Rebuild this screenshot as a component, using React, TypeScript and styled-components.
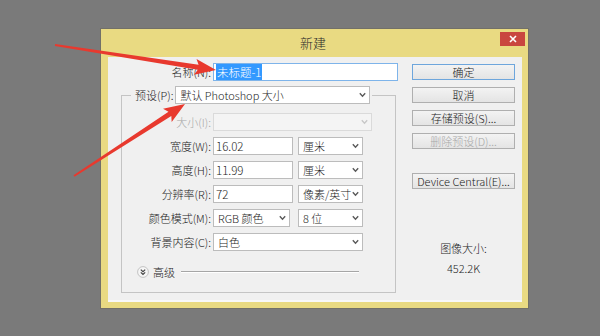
import React from "react";
import styled, { createGlobalStyle } from "styled-components";

const Global = createGlobalStyle`
  html, body { margin: 0; padding: 0; }
  body {
    background: #7a7a7a;
    width: 600px;
    height: 336px;
    overflow: hidden;
    font-family: "Noto Sans CJK SC", "Noto Sans", sans-serif;
    font-weight: 300;
    color: #1c1c1c;
  }
  * { box-sizing: border-box; }
`;

const Stage = styled.div`
  position: relative;
  width: 600px;
  height: 336px;
  padding: 29px 0 0 101px;
`;

const Dialog = styled.div`
  width: 427px;
  height: 279px;
  background: #e9da82;
  display: flex;
  flex-direction: column;
  box-shadow: 0 0 0 1px rgba(90, 85, 50, 0.25);
`;

const TitleBar = styled.div`
  height: 28px;
  display: grid;
  grid-template-columns: 1fr auto 1fr;
  padding-right: 3px;
`;

const Title = styled.div`
  grid-column: 2;
  align-self: center;
  font-size: 13px;
  color: #2a2a2a;
  margin-top: -1px;
`;

const CloseButton = styled.div`
  grid-column: 3;
  justify-self: end;
  align-self: start;
  margin-top: 3px;
  width: 25px;
  height: 14px;
  background: #c9463f;
  display: flex;
  align-items: center;
  justify-content: center;
`;

const Client = styled.div`
  flex: 1;
  margin: 0 6px 6px 7px;
  background: #f0f0f0;
  display: flex;
  padding: 6px 7px 0 0;
  border-bottom: 2px solid #f8f8f8;
`;

const LeftCol = styled.div`
  width: 292px;
  display: flex;
  flex-direction: column;
`;

const NameRow = styled.div`
  display: grid;
  grid-template-columns: 103px 185px;
  column-gap: 2px;
  align-items: center;
  height: 18px;
`;

const Label = styled.div<{ $disabled?: boolean }>`
  text-align: right;
  font-size: 11px;
  line-height: 18px;
  white-space: nowrap;
  color: ${(p) => (p.$disabled ? "#a8a8a8" : "#1c1c1c")};
`;

const TextBox = styled.div<{ $w: number; $focus?: boolean }>`
  width: ${(p) => p.$w}px;
  height: 18px;
  background: #fff;
  border: 1px solid ${(p) => (p.$focus ? "#7eb4ea" : "#bcbcbc")};
  font-size: 11.5px;
  line-height: 16px;
  padding-left: 2px;
  white-space: nowrap;
  overflow: hidden;
`;

const Selected = styled.span`
  background: #3399ff;
  color: #fff;
  padding: 0 1px;
`;

const SelectBox = styled.div<{ $w: number; $disabled?: boolean }>`
  width: ${(p) => p.$w}px;
  height: 18px;
  background: ${(p) => (p.$disabled ? "#f4f4f4" : "#fff")};
  border: 1px solid ${(p) => (p.$disabled ? "#dadada" : "#bcbcbc")};
  display: flex;
  align-items: center;
  padding: 0 3px 0 4px;
  font-size: 11px;
  white-space: nowrap;
  color: #1c1c1c;
`;

const SelectText = styled.span`
  flex: 1;
  min-width: 0;
  overflow: hidden;
`;

const Group = styled.fieldset`
  margin: 5px 0 0 13px;
  width: 275px;
  border: 1px solid #c4c4c4;
  padding: 9px 0 12px 0;
  min-inline-size: 0;
`;

const Legend = styled.legend`
  margin-left: 9px;
  padding: 0 2px 0 4px;
  display: flex;
  align-items: center;
  gap: 2px;
`;

const Rows = styled.div`
  display: grid;
  grid-template-columns: 89px auto;
  column-gap: 2px;
  row-gap: 6px;
  align-items: center;
  justify-items: start;
`;

const RowLabel = styled(Label)`
  justify-self: end;
`;

const Pair = styled.div<{ $gap: number }>`
  display: flex;
  gap: ${(p) => p.$gap}px;
`;

const Advanced = styled.div`
  margin: 13px 0 0 15px;
  height: 16px;
  display: flex;
  align-items: center;
  gap: 4px;
`;

const AdvText = styled.span`
  font-size: 11px;
  color: #1c1c1c;
`;

const Rule = styled.div`
  width: 178px;
  height: 2px;
  margin-left: 2px;
  border-top: 1px solid #a6a6a6;
  border-bottom: 1px solid #fff;
`;

const RightCol = styled.div`
  margin-left: 12px;
  width: 103px;
  display: flex;
  flex-direction: column;
  padding-top: 1px;
`;

const Button = styled.div<{ $primary?: boolean; $disabled?: boolean; $top?: number }>`
  height: 16px;
  margin-top: ${(p) => p.$top ?? 0}px;
  border: 1px solid ${(p) => (p.$primary ? "#6ea6dc" : "#afafaf")};
  background: linear-gradient(#f3f3f3, #e4e4e4);
  display: flex;
  align-items: center;
  justify-content: center;
  font-size: 11px;
  color: ${(p) => (p.$disabled ? "#a8a8a8" : "#1c1c1c")};
  white-space: nowrap;
`;

const SizeInfo = styled.div`
  margin-top: 49px;
  display: flex;
  flex-direction: column;
  align-items: center;
  font-size: 11px;
  line-height: 20px;
  color: #1c1c1c;
`;

const Overlay = styled.svg`
  position: absolute;
  left: 0;
  top: 0;
  pointer-events: none;
`;

const Chevron = ({ disabled }: { disabled?: boolean }) => (
  <svg width="7" height="6" viewBox="0 0 7 6" style={{ flexShrink: 0 }}>
    <path
      d="M0.8 1.3 L3.5 4.2 L6.2 1.3"
      fill="none"
      stroke={disabled ? "#c8c8c8" : "#5a5a5a"}
      strokeWidth="1.4"
    />
  </svg>
);

const Select = ({ w, value, disabled }: { w: number; value?: string; disabled?: boolean }) => (
  <SelectBox $w={w} $disabled={disabled}>
    <SelectText>{value ?? ""}</SelectText>
    <Chevron disabled={disabled} />
  </SelectBox>
);

function arrowPoints(x1: number, y1: number, x2: number, y2: number) {
  const head = 21;
  const headW = 8;
  const tailW = 0.9;
  const neckW = 2.5;
  const dx = x2 - x1;
  const dy = y2 - y1;
  const L = Math.hypot(dx, dy);
  const ux = dx / L;
  const uy = dy / L;
  const nx = -uy;
  const ny = ux;
  const bx = x2 - ux * head;
  const by = y2 - uy * head;
  const nkx = x2 - ux * (head - 3);
  const nky = y2 - uy * (head - 3);
  const pts = [
    [x1 + nx * tailW, y1 + ny * tailW],
    [nkx + nx * neckW, nky + ny * neckW],
    [bx + nx * headW, by + ny * headW],
    [x2, y2],
    [bx - nx * headW, by - ny * headW],
    [nkx - nx * neckW, nky - ny * neckW],
    [x1 - nx * tailW, y1 - ny * tailW],
  ];
  return pts.map((p) => `${p[0].toFixed(1)},${p[1].toFixed(1)}`).join(" ");
}

export default function App() {
  return (
    <>
      <Global />
      <Stage>
        <Dialog>
          <TitleBar>
            <Title>新建</Title>
            <CloseButton>
              <svg width="8" height="8" viewBox="0 0 8 8">
                <path d="M1 1 L7 7 M7 1 L1 7" stroke="#fff" strokeWidth="1.6" />
              </svg>
            </CloseButton>
          </TitleBar>
          <Client>
            <LeftCol>
              <NameRow>
                <Label>名称(N):</Label>
                <TextBox $w={185} $focus>
                  <Selected>未标题-1</Selected>
                </TextBox>
              </NameRow>
              <Group>
                <Legend>
                  <Label>预设(P):</Label>
                  <Select w={195} value="默认 Photoshop 大小" />
                </Legend>
                <Rows>
                  <RowLabel $disabled>大小(I):</RowLabel>
                  <Select w={159} disabled />
                  <RowLabel>宽度(W):</RowLabel>
                  <Pair $gap={5}>
                    <TextBox $w={80}>16.02</TextBox>
                    <Select w={65} value="厘米" />
                  </Pair>
                  <RowLabel>高度(H):</RowLabel>
                  <Pair $gap={5}>
                    <TextBox $w={80}>11.99</TextBox>
                    <Select w={65} value="厘米" />
                  </Pair>
                  <RowLabel>分辨率(R):</RowLabel>
                  <Pair $gap={5}>
                    <TextBox $w={80}>72</TextBox>
                    <Select w={65} value="像素/英寸" />
                  </Pair>
                  <RowLabel>颜色模式(M):</RowLabel>
                  <Pair $gap={8}>
                    <Select w={77} value="RGB 颜色" />
                    <Select w={65} value="8 位" />
                  </Pair>
                  <RowLabel>背景内容(C):</RowLabel>
                  <Select w={150} value="白色" />
                </Rows>
                <Advanced>
                  <svg width="12" height="12" viewBox="0 0 12 12">
                    <circle cx="6" cy="6" r="5.4" fill="#f6f6f6" stroke="#bdbdbd" strokeWidth="0.9" />
                    <path d="M3.8 3.6 L6 5.6 L8.2 3.6 M3.8 6.4 L6 8.4 L8.2 6.4" fill="none" stroke="#444" strokeWidth="1.2" />
                  </svg>
                  <AdvText>高级</AdvText>
                  <Rule />
                </Advanced>
              </Group>
            </LeftCol>
            <RightCol>
              <Button $primary>确定</Button>
              <Button $top={7}>取消</Button>
              <Button $top={7}>存储预设(S)...</Button>
              <Button $top={7} $disabled>删除预设(D)...</Button>
              <Button $top={24}>Device Central(E)...</Button>
              <SizeInfo>
                <span>图像大小:</span>
                <span>452.2K</span>
              </SizeInfo>
            </RightCol>
          </Client>
        </Dialog>
        <Overlay width="600" height="336" viewBox="0 0 600 336">
          <polygon points={arrowPoints(55, 45, 216, 70)} fill="#e8392e" />
          <polygon points={arrowPoints(74, 176, 185, 104)} fill="#e8392e" />
        </Overlay>
      </Stage>
    </>
  );
}
